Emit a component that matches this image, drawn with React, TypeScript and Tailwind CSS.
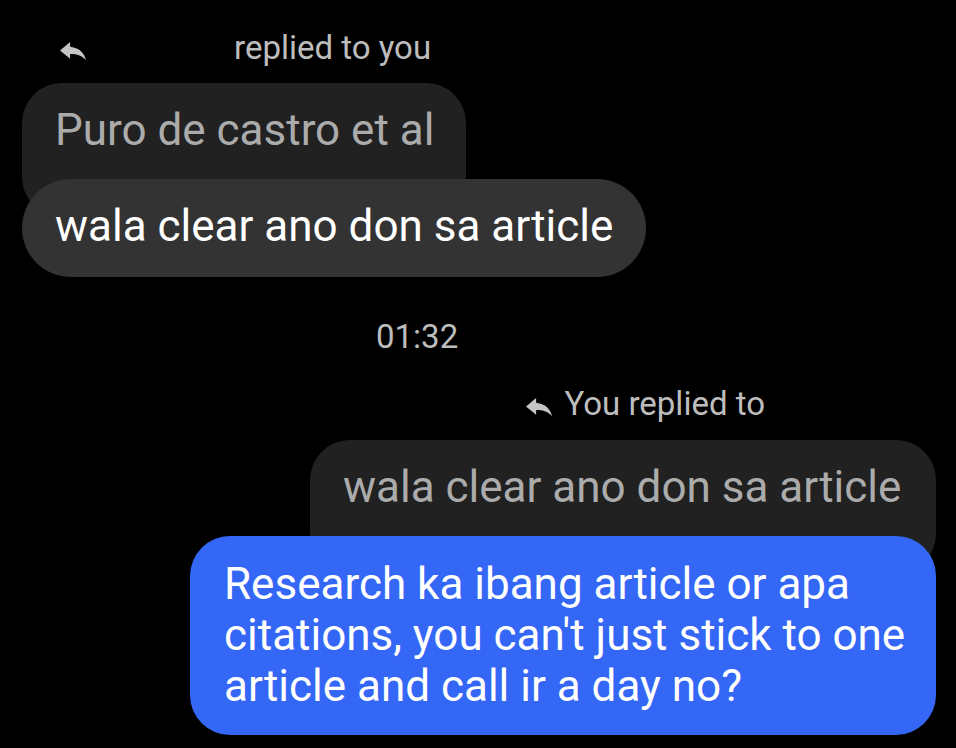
import React from "react"

function ReplyIcon({ className }: { className?: string }) {
  return (
    <svg
      className={className}
      width="26"
      height="18"
      viewBox="3 5 18 15"
      preserveAspectRatio="none"
      fill="currentColor"
    >
      <path d="M10 9V5l-7 7 7 7v-4.1c5 0 8.5 1.6 11 5.1-1-5-4-10-11-11z" />
    </svg>
  )
}

export default function App() {
  return (
    <div className="w-[956px] h-[748px] overflow-hidden bg-black pt-[28px] font-['Roboto',sans-serif]">
      {/* Incoming reply */}
      <div className="pl-[22px]">
        <div className="flex items-start h-[40px] text-[33px] leading-[40px] text-[#bdbdbd]">
          <ReplyIcon className="ml-[38px] mt-[14px] text-[#c4c4c4]" />
          <span className="ml-[148px]">replied to you</span>
        </div>
        <div className="mt-[15px] w-[444px] h-[134px] rounded-[40px] bg-[#212121] pl-[33px] pt-[21px] text-[44px] leading-[52px] text-[#ababab] whitespace-nowrap">
          Puro de castro et al
        </div>
        <div className="relative -mt-[38px] w-[624px] h-[98px] rounded-full bg-[#333333] pl-[33px] pt-[21px] text-[44px] leading-[52px] text-white whitespace-nowrap">
          wala clear ano don sa article
        </div>
      </div>

      {/* Time */}
      <div className="mt-[40px] pl-[376px] text-[33px] leading-[40px] text-[#bdbdbd]">01:32</div>

      {/* Outgoing reply */}
      <div className="mt-[27px] flex flex-col items-end pr-[20px]">
        <div className="flex items-start h-[40px] mr-[171px] text-[33px] leading-[40px] text-[#bdbdbd]">
          <ReplyIcon className="mt-[14px] text-[#c4c4c4]" />
          <span className="ml-[12px]">You replied to</span>
        </div>
        <div className="mt-[16px] w-[626px] h-[134px] rounded-[40px] bg-[#212121] pl-[33px] pt-[21px] text-[44px] leading-[52px] text-[#ababab] whitespace-nowrap">
          wala clear ano don sa article
        </div>
        <div className="relative -mt-[38px] w-[746px] rounded-[40px] bg-[#3467f6] pl-[34px] pt-[23px] pb-[23px] text-[44px] leading-[51px] text-white whitespace-nowrap">
          <div>Research ka ibang article or apa</div>
          <div>citations, you can't just stick to one</div>
          <div>article and call ir a day no?</div>
        </div>
      </div>
    </div>
  )
}
